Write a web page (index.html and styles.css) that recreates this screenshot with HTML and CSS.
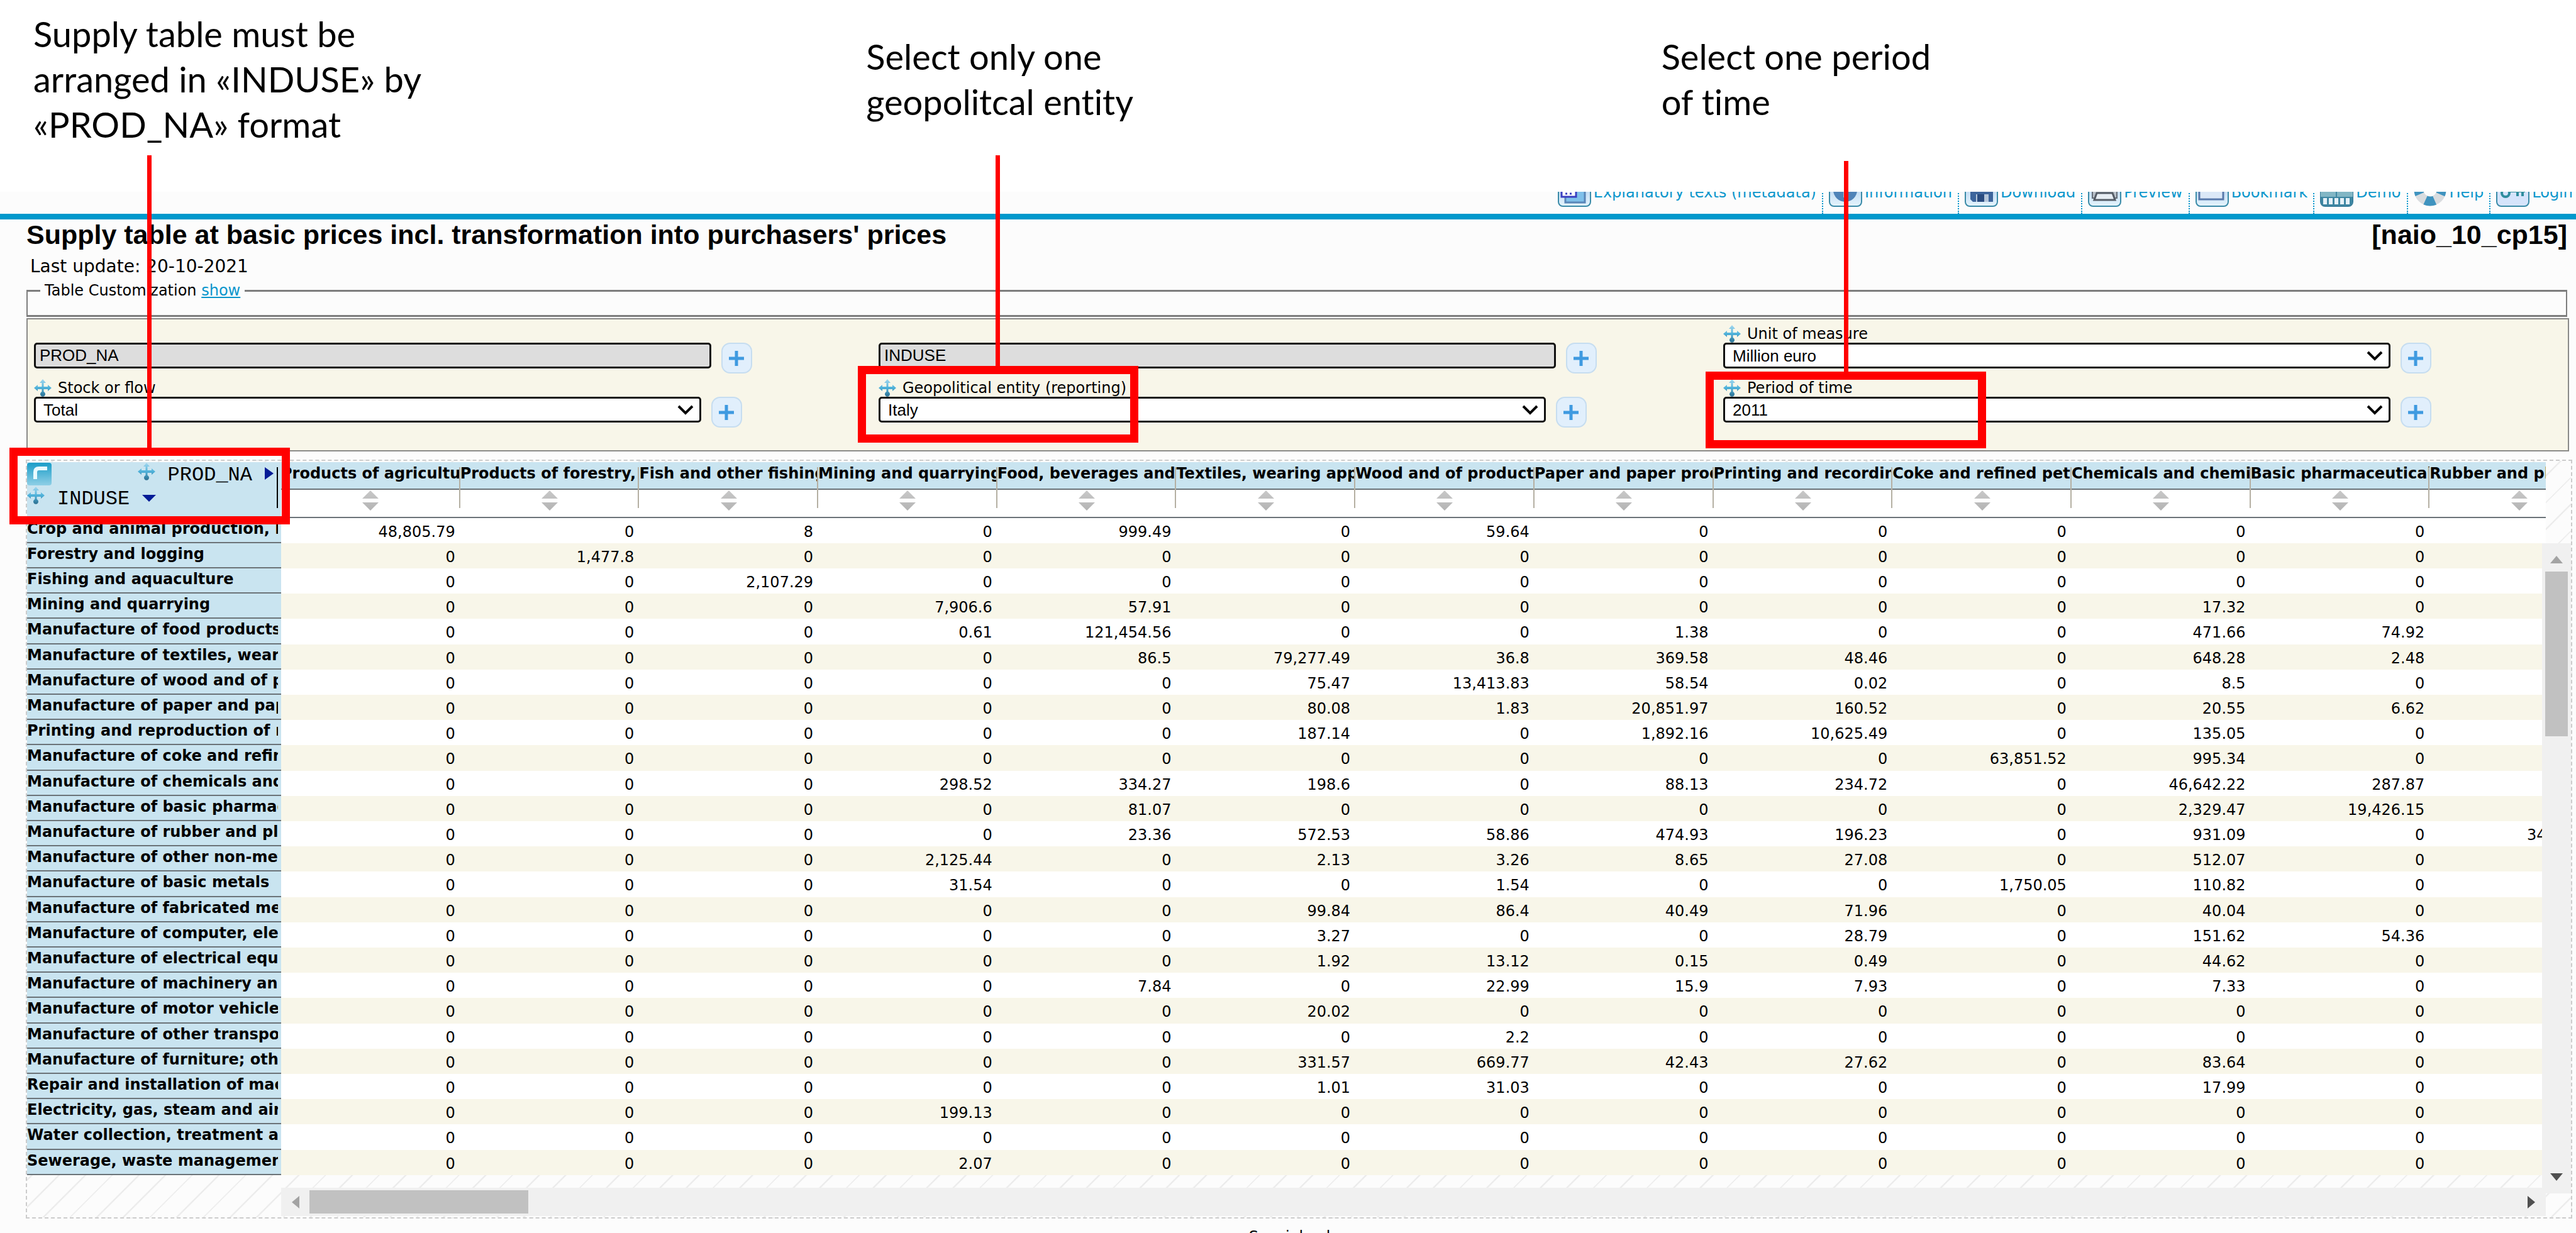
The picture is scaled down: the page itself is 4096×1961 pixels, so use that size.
FILE: index.html
```html
<!DOCTYPE html>
<html lang="en">
<head>
<meta charset="utf-8">
<title>Supply table at basic prices</title>
<link rel="stylesheet" href="styles.css">
</head>
<body>
<svg width="0" height="0" class="defs" aria-hidden="true">
  <defs>
    <linearGradient id="tile" x1="0" y1="0" x2="0" y2="1"><stop offset="0.5" stop-color="#c3dcf3"/><stop offset="1" stop-color="#e4f4fd"/></linearGradient>
    <linearGradient id="teal" x1="0" y1="0" x2="0" y2="1"><stop offset="0" stop-color="#1b9dc8"/><stop offset="1" stop-color="#8fcfe6"/></linearGradient>
    <linearGradient id="mv" x1="0" y1="0" x2="0" y2="1"><stop offset="0" stop-color="#a5d8ef"/><stop offset="0.5" stop-color="#4fb2da"/><stop offset="1" stop-color="#2b6f90"/></linearGradient>
    <linearGradient id="sortg" x1="0" y1="0" x2="0" y2="1"><stop offset="0" stop-color="#c8c8c8"/><stop offset="1" stop-color="#b4b4b4"/></linearGradient>
    <symbol id="move" viewBox="0 0 28 28"><path fill="url(#mv)" d="M14 0l5 6h-3.500v6h6.500v-3l6 5-6 5v-3h-6.500v4a4 4 0 1 1-3 0v-4H6v3l-6-5 6-5v3h6.500V6H9z"/></symbol>
    <symbol id="sort" viewBox="0 0 26 32"><path fill="url(#sortg)" d="M13 0l13 13H0zM0 19h26L13 32z"/></symbol>
    <symbol id="chev" viewBox="0 0 26 16"><path fill="none" stroke="#000" stroke-width="4" d="M2 2l11 11L24 2"/></symbol>
    <symbol id="plus" viewBox="0 0 24 24"><path fill="none" stroke="#3f9ae0" stroke-width="5" d="M12 0v24M0 12h24"/></symbol>
  </defs>
</svg>

<header class="notes">
  <p class="note note-first">Supply table must be<br>arranged in «INDUSE» by<br>«PROD_NA» format</p>
  <p class="note">Select only one<br>geopolitcal entity</p>
  <p class="note">Select one period<br>of time</p>
</header>

<div class="app">
<nav class="toolbar">
  <a href="#"><svg viewBox="0 0 53 53"><rect x="1" y="1" width="51" height="51" rx="7" fill="url(#tile)" stroke="#3a8ba8" stroke-width="2"/><rect x="12" y="18" width="31" height="28" fill="#7fc0ea" stroke="#5a86b8" stroke-width="3"/><rect x="6" y="12" width="23" height="25" fill="#fff" stroke="#3a3fc0" stroke-width="3"/><path d="M12 32h3m4 0h3" stroke="#3a3fc0" stroke-width="3"/></svg>Explanatory texts (metadata)</a>
  <a href="#"><svg viewBox="0 0 53 53"><rect x="1" y="1" width="51" height="51" rx="7" fill="url(#tile)" stroke="#3a8ba8" stroke-width="2"/><circle cx="26" cy="26" r="19" fill="#4f83b8"/><path d="M26 14v4m0 4v16" stroke="#fff" stroke-width="5"/></svg>Information</a>
  <a href="#"><svg viewBox="0 0 53 53"><rect x="1" y="1" width="51" height="51" rx="7" fill="url(#tile)" stroke="#3a8ba8" stroke-width="2"/><path d="M9 9h36v36H13l-4-4z" fill="#3d659c"/><path d="M18 33h20v12H18z" fill="#b5c6da"/><path d="M20 33h11v12H20z" fill="#2a4c80"/></svg>Download</a>
  <a href="#"><svg viewBox="0 0 53 53"><rect x="1" y="1" width="51" height="51" rx="7" fill="url(#tile)" stroke="#3a8ba8" stroke-width="2"/><path d="M7 20h39v19H7z" fill="#b9c0c8" stroke="#666d78" stroke-width="2"/><path d="M14 31h25l4 11H10z" fill="#e8eef4" stroke="#555c66" stroke-width="3"/></svg>Preview</a>
  <a href="#"><svg viewBox="0 0 53 53"><rect x="1" y="1" width="51" height="51" rx="7" fill="url(#tile)" stroke="#3a8ba8" stroke-width="2"/><rect x="6" y="12" width="38" height="29" fill="#dbe8f7" stroke="#5879ab" stroke-width="3"/></svg>Bookmark</a>
  <a href="#"><svg viewBox="0 0 53 53"><rect x="1" y="1" width="51" height="51" rx="7" fill="#3f87a3" stroke="#3a7f9c" stroke-width="2"/><path d="M1 12h51v25H1z" fill="#82b6c4"/><path d="M26 12v25" stroke="#3f87a3" stroke-width="2"/><path d="M5 44h43" stroke="#e6f1f8" stroke-width="10" stroke-dasharray="6 3"/></svg>Demo</a>
  <a href="#"><svg viewBox="0 0 53 53"><circle cx="26" cy="26" r="18" fill="none" stroke="#d9dcdf" stroke-width="15"/><circle cx="26" cy="26" r="18" fill="none" stroke="#3f93bf" stroke-width="15" stroke-dasharray="15 13.270" stroke-dashoffset="7.500"/></svg>Help</a>
  <a href="#"><svg viewBox="0 0 53 53"><rect x="1" y="1" width="51" height="51" rx="7" fill="#d5e4fb" stroke="#3a8ba8" stroke-width="2"/><circle cx="15" cy="31" r="6" fill="none" stroke="#2f8d9e" stroke-width="4"/><path d="M20 28h26M34 28v8m8-8v8" stroke="#2f8d9e" stroke-width="4"/></svg>Login</a>
</nav>

<main class="page">
  <div class="heading">
    <h1>Supply table at basic prices incl. transformation into purchasers' prices</h1>
    <span class="code">[naio_10_cp15]</span>
  </div>
  <p class="updated">Last update: 20-10-2021</p>

  <fieldset class="custom"><legend>Table Customization <a href="#">show</a></legend></fieldset>

  <form class="filters">
    <div class="field wide">
      <span class="label"></span>
      <div class="control"><input type="text" readonly value="PROD_NA" aria-label="PROD_NA"><button type="button" aria-label="Add PROD_NA"><svg><use href="#plus"/></svg></button></div>
    </div>
    <div class="field wide">
      <span class="label"></span>
      <div class="control"><input type="text" readonly value="INDUSE" aria-label="INDUSE"><button type="button" aria-label="Add INDUSE"><svg><use href="#plus"/></svg></button></div>
    </div>
    <div class="field">
      <label class="label" for="unit"><svg><use href="#move"/></svg>Unit of measure</label>
      <div class="control"><span class="pick"><select id="unit"><option>Million euro</option></select><svg><use href="#chev"/></svg></span><button type="button" aria-label="Add unit"><svg><use href="#plus"/></svg></button></div>
    </div>
    <div class="field">
      <label class="label" for="stock"><svg><use href="#move"/></svg>Stock or flow</label>
      <div class="control"><span class="pick"><select id="stock"><option>Total</option></select><svg><use href="#chev"/></svg></span><button type="button" aria-label="Add stock"><svg><use href="#plus"/></svg></button></div>
    </div>
    <div class="field">
      <label class="label" for="geo"><svg><use href="#move"/></svg>Geopolitical entity (reporting)</label>
      <div class="control"><span class="pick"><select id="geo"><option>Italy</option></select><svg><use href="#chev"/></svg></span><button type="button" aria-label="Add entity"><svg><use href="#plus"/></svg></button></div>
    </div>
    <div class="field">
      <label class="label" for="time"><svg><use href="#move"/></svg>Period of time</label>
      <div class="control"><span class="pick"><select id="time"><option>2011</option></select><svg><use href="#chev"/></svg></span><button type="button" aria-label="Add period"><svg><use href="#plus"/></svg></button></div>
    </div>
  </form>
</main>

<section class="frame">
  <div class="clip">
  <table>
    <colgroup><col class="c-name"><col span="13"></colgroup>
    <thead>
      <tr class="names">
        <th rowspan="2" class="corner"><div class="corner-box">
          <div class="axis"><svg class="logo" viewBox="0 0 39 36"><rect width="39" height="36" rx="4" fill="url(#teal)"/><path d="M13 26V15q0-6 6-6h13" fill="none" stroke="#e9faff" stroke-width="6"/></svg><svg class="mv right"><use href="#move"/></svg><span>PROD_NA</span><svg class="arr-r" viewBox="0 0 14 20"><path fill="#041b96" d="M0 0l14 10L0 20z"/></svg></div>
          <div class="axis second"><svg class="mv"><use href="#move"/></svg><span>INDUSE</span><svg class="arr-d" viewBox="0 0 22 11"><path fill="#041b96" d="M0 0h22L11 11z"/></svg></div>
        </div></th>
        <th><span>Products of agriculture, hunting</span></th><th><span>Products of forestry, logging</span></th><th><span>Fish and other fishing products</span></th><th><span>Mining and quarrying</span></th><th><span>Food, beverages and tobacco</span></th><th><span>Textiles, wearing apparel</span></th><th><span>Wood and of products of wood</span></th><th><span>Paper and paper products</span></th><th><span>Printing and recording services</span></th><th><span>Coke and refined petroleum</span></th><th><span>Chemicals and chemical products</span></th><th><span>Basic pharmaceutical products</span></th><th><span>Rubber and plastic products</span></th>
      </tr>
      <tr class="sorts">
        <td><svg><use href="#sort"/></svg></td><td><svg><use href="#sort"/></svg></td><td><svg><use href="#sort"/></svg></td><td><svg><use href="#sort"/></svg></td><td><svg><use href="#sort"/></svg></td><td><svg><use href="#sort"/></svg></td><td><svg><use href="#sort"/></svg></td><td><svg><use href="#sort"/></svg></td><td><svg><use href="#sort"/></svg></td><td><svg><use href="#sort"/></svg></td><td><svg><use href="#sort"/></svg></td><td><svg><use href="#sort"/></svg></td><td><svg><use href="#sort"/></svg></td>
      </tr>
    </thead>
    <tbody>
      <tr><th><span>Crop and animal production, hunting</span></th><td>48,805.79</td><td>0</td><td>8</td><td>0</td><td>999.49</td><td>0</td><td>59.64</td><td>0</td><td>0</td><td>0</td><td>0</td><td>0</td><td>0</td></tr>
      <tr><th><span>Forestry and logging</span></th><td>0</td><td>1,477.8</td><td>0</td><td>0</td><td>0</td><td>0</td><td>0</td><td>0</td><td>0</td><td>0</td><td>0</td><td>0</td><td>0</td></tr>
      <tr><th><span>Fishing and aquaculture</span></th><td>0</td><td>0</td><td>2,107.29</td><td>0</td><td>0</td><td>0</td><td>0</td><td>0</td><td>0</td><td>0</td><td>0</td><td>0</td><td>0</td></tr>
      <tr><th><span>Mining and quarrying</span></th><td>0</td><td>0</td><td>0</td><td>7,906.6</td><td>57.91</td><td>0</td><td>0</td><td>0</td><td>0</td><td>0</td><td>17.32</td><td>0</td><td>0</td></tr>
      <tr><th><span>Manufacture of food products; beverages</span></th><td>0</td><td>0</td><td>0</td><td>0.61</td><td>121,454.56</td><td>0</td><td>0</td><td>1.38</td><td>0</td><td>0</td><td>471.66</td><td>74.92</td><td>0</td></tr>
      <tr><th><span>Manufacture of textiles, wearing apparel</span></th><td>0</td><td>0</td><td>0</td><td>0</td><td>86.5</td><td>79,277.49</td><td>36.8</td><td>369.58</td><td>48.46</td><td>0</td><td>648.28</td><td>2.48</td><td>0</td></tr>
      <tr><th><span>Manufacture of wood and of products</span></th><td>0</td><td>0</td><td>0</td><td>0</td><td>0</td><td>75.47</td><td>13,413.83</td><td>58.54</td><td>0.02</td><td>0</td><td>8.5</td><td>0</td><td>0</td></tr>
      <tr><th><span>Manufacture of paper and paper products</span></th><td>0</td><td>0</td><td>0</td><td>0</td><td>0</td><td>80.08</td><td>1.83</td><td>20,851.97</td><td>160.52</td><td>0</td><td>20.55</td><td>6.62</td><td>0</td></tr>
      <tr><th><span>Printing and reproduction of recorded media</span></th><td>0</td><td>0</td><td>0</td><td>0</td><td>0</td><td>187.14</td><td>0</td><td>1,892.16</td><td>10,625.49</td><td>0</td><td>135.05</td><td>0</td><td>0</td></tr>
      <tr><th><span>Manufacture of coke and refined petroleum</span></th><td>0</td><td>0</td><td>0</td><td>0</td><td>0</td><td>0</td><td>0</td><td>0</td><td>0</td><td>63,851.52</td><td>995.34</td><td>0</td><td>0</td></tr>
      <tr><th><span>Manufacture of chemicals and chemical products</span></th><td>0</td><td>0</td><td>0</td><td>298.52</td><td>334.27</td><td>198.6</td><td>0</td><td>88.13</td><td>234.72</td><td>0</td><td>46,642.22</td><td>287.87</td><td>0</td></tr>
      <tr><th><span>Manufacture of basic pharmaceutical products</span></th><td>0</td><td>0</td><td>0</td><td>0</td><td>81.07</td><td>0</td><td>0</td><td>0</td><td>0</td><td>0</td><td>2,329.47</td><td>19,426.15</td><td>0</td></tr>
      <tr><th><span>Manufacture of rubber and plastic products</span></th><td>0</td><td>0</td><td>0</td><td>0</td><td>23.36</td><td>572.53</td><td>58.86</td><td>474.93</td><td>196.23</td><td>0</td><td>931.09</td><td>0</td><td>34,000.00</td></tr>
      <tr><th><span>Manufacture of other non-metallic mineral products</span></th><td>0</td><td>0</td><td>0</td><td>2,125.44</td><td>0</td><td>2.13</td><td>3.26</td><td>8.65</td><td>27.08</td><td>0</td><td>512.07</td><td>0</td><td>0</td></tr>
      <tr><th><span>Manufacture of basic metals</span></th><td>0</td><td>0</td><td>0</td><td>31.54</td><td>0</td><td>0</td><td>1.54</td><td>0</td><td>0</td><td>1,750.05</td><td>110.82</td><td>0</td><td>0</td></tr>
      <tr><th><span>Manufacture of fabricated metal products</span></th><td>0</td><td>0</td><td>0</td><td>0</td><td>0</td><td>99.84</td><td>86.4</td><td>40.49</td><td>71.96</td><td>0</td><td>40.04</td><td>0</td><td>0</td></tr>
      <tr><th><span>Manufacture of computer, electronic products</span></th><td>0</td><td>0</td><td>0</td><td>0</td><td>0</td><td>3.27</td><td>0</td><td>0</td><td>28.79</td><td>0</td><td>151.62</td><td>54.36</td><td>0</td></tr>
      <tr><th><span>Manufacture of electrical equipment</span></th><td>0</td><td>0</td><td>0</td><td>0</td><td>0</td><td>1.92</td><td>13.12</td><td>0.15</td><td>0.49</td><td>0</td><td>44.62</td><td>0</td><td>0</td></tr>
      <tr><th><span>Manufacture of machinery and equipment</span></th><td>0</td><td>0</td><td>0</td><td>0</td><td>7.84</td><td>0</td><td>22.99</td><td>15.9</td><td>7.93</td><td>0</td><td>7.33</td><td>0</td><td>0</td></tr>
      <tr><th><span>Manufacture of motor vehicles, trailers</span></th><td>0</td><td>0</td><td>0</td><td>0</td><td>0</td><td>20.02</td><td>0</td><td>0</td><td>0</td><td>0</td><td>0</td><td>0</td><td>0</td></tr>
      <tr><th><span>Manufacture of other transport equipment</span></th><td>0</td><td>0</td><td>0</td><td>0</td><td>0</td><td>0</td><td>2.2</td><td>0</td><td>0</td><td>0</td><td>0</td><td>0</td><td>0</td></tr>
      <tr><th><span>Manufacture of furniture; other manufacturing</span></th><td>0</td><td>0</td><td>0</td><td>0</td><td>0</td><td>331.57</td><td>669.77</td><td>42.43</td><td>27.62</td><td>0</td><td>83.64</td><td>0</td><td>0</td></tr>
      <tr><th><span>Repair and installation of machinery</span></th><td>0</td><td>0</td><td>0</td><td>0</td><td>0</td><td>1.01</td><td>31.03</td><td>0</td><td>0</td><td>0</td><td>17.99</td><td>0</td><td>0</td></tr>
      <tr><th><span>Electricity, gas, steam and air conditioning</span></th><td>0</td><td>0</td><td>0</td><td>199.13</td><td>0</td><td>0</td><td>0</td><td>0</td><td>0</td><td>0</td><td>0</td><td>0</td><td>0</td></tr>
      <tr><th><span>Water collection, treatment and supply</span></th><td>0</td><td>0</td><td>0</td><td>0</td><td>0</td><td>0</td><td>0</td><td>0</td><td>0</td><td>0</td><td>0</td><td>0</td><td>0</td></tr>
      <tr><th><span>Sewerage, waste management, remediation</span></th><td>0</td><td>0</td><td>0</td><td>2.07</td><td>0</td><td>0</td><td>0</td><td>0</td><td>0</td><td>0</td><td>0</td><td>0</td><td>0</td></tr>
    </tbody>
  </table>
  </div>
  <div class="vbar">
    <svg viewBox="0 0 20 12"><path fill="#a3a3a3" d="M0 12L10 0l10 12z"/></svg>
    <div class="thumb"></div>
    <svg class="end" viewBox="0 0 20 12"><path fill="#505050" d="M0 0h20L10 12z"/></svg>
  </div>
  <div class="hbar">
    <svg viewBox="0 0 12 20"><path fill="#a3a3a3" d="M12 0v20L0 10z"/></svg>
    <div class="thumb"></div>
    <svg class="end" viewBox="0 0 12 20"><path fill="#505050" d="M0 0l12 10L0 20z"/></svg>
  </div>
</section>
<p class="foot">Special value</p>
</div>

<i class="line line-1"></i><i class="box box-1"></i>
<i class="line line-2"></i><i class="box box-2"></i>
<i class="line line-3"></i><i class="box box-3"></i>
</body>
</html>
```
FILE: styles.css
```css
* { box-sizing: border-box; }
html, body { height: 100%; }
body {
  margin: 0;
  position: relative;
  overflow: hidden;
  background: #fff;
  color: #000;
  font: 24px/28px "DejaVu Sans", Verdana, sans-serif;
}
.defs { position: absolute; }
p, h1 { margin: 0; }
a { color: #0a96cc; }

/* explanatory notes above the application */
.notes {
  display: grid;
  grid-template-columns: 1324fr 1264fr 1454fr;
  height: 305px;
  padding: 18px 0 0 53px;
}
.note { font: 56px/72px Lato, sans-serif; padding-top: 36px; font-variant-ligatures: none; }
.note-first { padding-top: 0; }

.app { background: #fcfcfc; }

/* toolbar, scrolled half out of view */
.toolbar {
  display: flex;
  justify-content: flex-end;
  align-items: flex-end;
  height: 44px;
  overflow: hidden;
  border-bottom: 9px solid #0099cc;
  padding-right: 5px;
}
.toolbar a {
  display: flex;
  flex: none;
  align-items: flex-end;
  gap: 4px;
  height: 64px;
  padding: 0 9px 11px;
  text-decoration: none;
  white-space: nowrap;
  line-height: 46px;
  border-left: 2px dotted #0a96cc;
}
.toolbar a:first-child { border-left: 0; }
.toolbar a:last-child { padding-right: 0; }
.toolbar svg { width: 53px; height: 53px; }

.page { padding: 0 14px 0 42px; }
.heading { display: flex; justify-content: space-between; font: bold 43px/48px "Liberation Sans", Arial, sans-serif; }
h1 { font: inherit; }
.updated { margin: 13px 0 10px 6px; font-size: 28px; }

.custom { margin: 0; padding: 0 20px 25px; border: 3px solid #7d7d7d; border-width: 3px 2px; }
.custom legend { padding: 0 7px; }

.filters {
  display: grid;
  grid-template-columns: repeat(3, 1fr);
  row-gap: 9px;
  margin: 2px -3px 0 0;
  padding: 9px 0 36px 10px;
  background: #f8f6e9;
  border: 2px solid #8a8a88;
}
.field { min-width: 0; }
.label { display: flex; gap: 10px; height: 28px; }
.label svg { width: 28px; height: 28px; }
.control { display: flex; gap: 16px; height: 49px; align-items: flex-start; }
.pick, .control input { width: 79%; height: 41px; position: relative; }
.wide input { width: calc(79% + 16px); }
.control input, .control select {
  font: 26px/32px "Liberation Sans", Arial, sans-serif;
  color: #000;
  border: 3px solid #111;
  border-radius: 5px;
  background: #ddd;
  padding: 0 6px;
}
.control select { appearance: none; width: 100%; height: 41px; background: #fff; padding: 0 12px; }
.pick svg { position: absolute; right: 12px; top: 13px; width: 26px; height: 16px; pointer-events: none; }
.control button {
  display: flex;
  align-items: center;
  justify-content: center;
  width: 49px;
  height: 49px;
  padding: 0;
  border: 2px solid #c6ddf0;
  border-radius: 14px;
  background: #e1effc;
}
.control button svg { width: 24px; height: 24px; }

/* data grid */
.frame {
  display: grid;
  grid-template-columns: minmax(0, 1fr) 40px;
  margin: 13px 6px 0 41px;
  padding-top: 2px;
  border: 2px dashed #ccc;
  background: repeating-linear-gradient(135deg, #fcfcfc 0 28px, #ebebeb 28px 30px);
}
.clip { overflow: hidden; background: #fff; }
table { table-layout: fixed; width: 102.5%; border-spacing: 0; font-size: 24px; }
.c-name { width: 404px; }
th, td { padding: 0; white-space: nowrap; height: 40px; }
th { background: #c9e4f0; text-align: left; vertical-align: top; line-height: 34px; border-bottom: 2px solid #6b7378; }
th span { display: block; overflow: hidden; }
td { text-align: right; vertical-align: top; line-height: 36px; padding: 4px 8px 0 0; }
tbody th span { margin-right: 5px; }
tbody tr:nth-child(even) td { background: #f8f6e9; }
tbody tr:nth-child(5n) > * { height: 41px; }
.names th { height: 44px; position: relative; line-height: 36px; }
.names th:not(.corner)::after {
  content: "";
  position: absolute;
  z-index: 1;
  right: 0;
  top: 8px;
  width: 2px;
  height: 65px;
  background: #b5b0a3;
}
.sorts td { height: 45px; line-height: 0; text-align: center; padding: 1px 0 0; border-bottom: 2px solid #6b7378; }
.sorts svg { width: 26px; height: 32px; }

.names .corner { border-bottom: 0; }
.corner-box { display: flex; flex-direction: column; gap: 2px; height: 76px; margin-right: 5px; padding-top: 1px; position: relative; }
.corner-box::after { content: ""; position: absolute; right: 0; top: 8px; width: 2px; height: 65px; background: #000; }
.axis { display: flex; align-items: flex-start; height: 36px; font: 32px/40px "Liberation Mono", "Courier New", monospace; padding-right: 7px; }
.axis .logo { width: 39px; height: 36px; }
.axis .mv { width: 28px; height: 28px; }
.axis .right { margin-left: auto; }
.axis span { padding: 0 20px; }
.axis .arr-r { width: 14px; height: 20px; margin-top: 7px; }
.axis .arr-d { width: 22px; height: 11px; margin-top: 13px; }

.vbar {
  grid-area: 1 / 2 / 3 / 3;
  z-index: 2;
  margin: 129px 0 38px -6px;
  padding: 20px 5px;
  background: #f0f0f0;
  display: flex;
  flex-direction: column;
  align-items: center;
}
.vbar svg { width: 20px; height: 12px; }
.vbar .thumb { width: 36px; height: 262px; margin-top: 13px; background: #c1c1c1; }
.vbar .end { margin-top: auto; }
.hbar {
  grid-area: 2 / 1;
  display: flex;
  align-items: center;
  height: 45px;
  margin: 20px 0 2px 404px;
  padding: 0 17px;
  background: #f0f0f0;
}
.hbar svg { width: 12px; height: 20px; }
.hbar .thumb { width: 348px; height: 37px; margin-left: 16px; background: #c1c1c1; }
.hbar .end { margin-left: auto; }
.foot { margin: 15px 6px 0 41px; text-align: center; }

/* red call-outs drawn over the page */
.line, .box { position: absolute; z-index: 5; }
.line { width: 7px; background: #f00; }
.box { width: 446px; height: 122px; border: 13px solid #f00; }
.line-1 { left: 234px; top: 247px; height: 467px; }
.line-2 { left: 1583px; top: 247px; height: 337px; }
.line-3 { left: 2932px; top: 256px; height: 337px; }
.box-1 { left: 15px; top: 712px; }
.box-2 { left: 1364px; top: 582px; }
.box-3 { left: 2712px; top: 591px; }
```
